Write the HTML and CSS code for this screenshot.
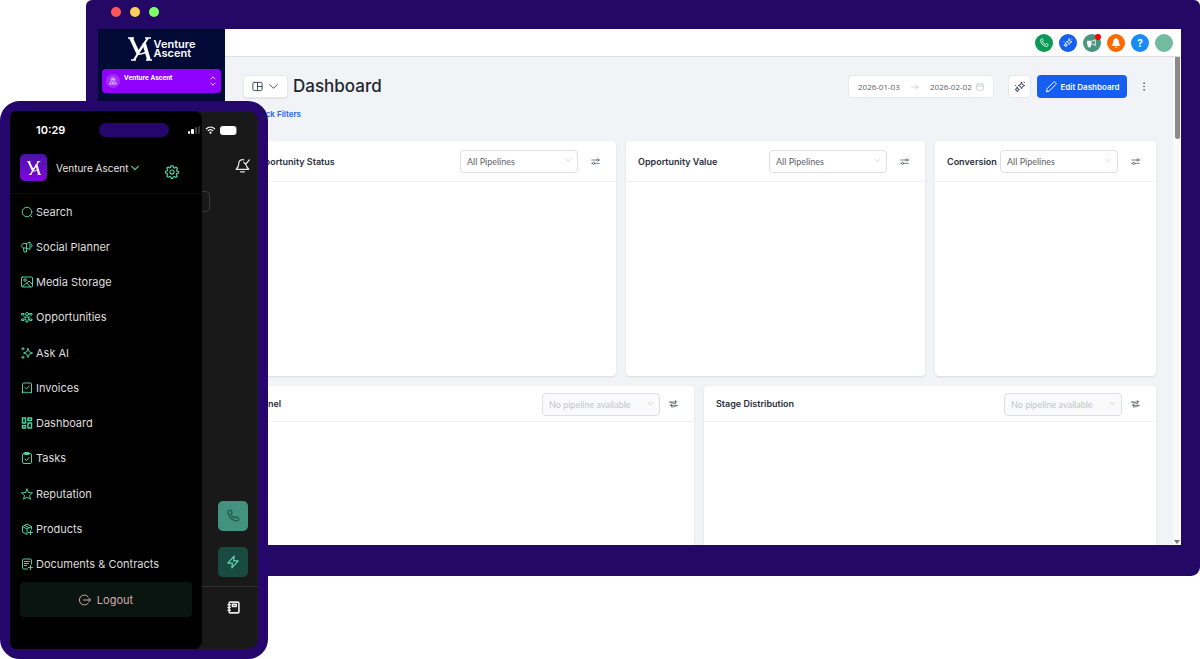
FILE: index.html
```html
<!DOCTYPE html>
<html lang="en">
<head>
  <meta charset="UTF-8">
  <meta name="viewport" content="width=device-width, initial-scale=1.0">
  <title>Venture Ascent</title>
  <link rel="stylesheet" href="styles.css">
</head>
<body>
  <!-- shared icons -->
  <svg class="sprite" aria-hidden="true">
    <symbol id="va-mark" viewBox="0 0 24 24">
      <path d="M3 1l7 15" fill="none" stroke="currentColor" stroke-width="3.6"/>
      <path d="M20 1L9 17M16 7L6 23" fill="none" stroke="currentColor" stroke-width="2.2"/>
      <path d="M16 6l5 17" fill="none" stroke="currentColor" stroke-width="3.6"/>
      <path d="M9 17c4 1 7-1 10-2" fill="none" stroke="currentColor" stroke-width="1.6"/>
      <path d="M0 1h6M17 1h6M3 23h5M18 23h6" stroke="currentColor" stroke-width="1.4"/>
    </symbol>
    <symbol id="chevron" viewBox="0 0 24 24"><path d="M4 8l8 8 8-8"/></symbol>
    <symbol id="phone" viewBox="0 0 24 24"><path d="M8.4 8.9c.7 1.4 1.6 2.8 2.8 3.9 1.100 1.200 2.500 2.100 3.900 2.800l2-1.700c.4-.3 1-.3 1.500-.1l2.700 1.500c.8.400 1 1.300.600 2l-1 1.900c-.5 1-1.500 1.500-2.600 1.300C10.500 19.300 4.700 13.500 3.500 5.700 3.300 4.600 3.800 3.600 4.800 3.100l1.900-1c.7-.4 1.600-.2 2 .600l1.500 2.700c.200.500.200 1.100-.1 1.500z"/></symbol>
    <symbol id="sparkles" viewBox="0 0 24 24">
      <path d="M15 2.500l1.900 4.600 4.600 1.900-4.600 1.900L15 15.500l-1.900-4.600L8.500 9l4.600-1.900z"/>
      <path d="M6.500 12.500l1.300 3.200L11 17l-3.200 1.300-1.300 3.200-1.300-3.200L2 17l3.200-1.300z"/>
      <path d="M20 2l1 1M3 9l1 1"/>
    </symbol>
    <symbol id="sliders" viewBox="0 0 24 24">
      <path d="M2 8h13M21 8h1M2 17h2M10 17h12"/><circle cx="18" cy="8" r="3"/><circle cx="7" cy="17" r="3"/>
    </symbol>
    <symbol id="swap" viewBox="0 0 24 24">
      <path d="M2 8h19l-4-4v8zM22 17H3l4-4v8z"/>
    </symbol>
    <symbol id="megaphone" viewBox="0 0 24 24">
      <path d="M5 5h6l7-3v15l-7-3H5c-5 0-5-9 0-9zM5 14l1 8h5v-8M11 5v9M20 6c3 1 3 6 0 7"/>
    </symbol>
  </svg>

  <div class="stage">
    <div class="desktop">
      <div class="window-bar">
        <span class="light red"></span>
        <span class="light yellow"></span>
        <span class="light green"></span>
      </div>
      <div class="window">
        <aside class="sidebar">
          <div class="brand">
            <svg class="brand-mark"><use href="#va-mark"/></svg>
            <span class="brand-name">Venture<br>Ascent</span>
          </div>
          <button class="switcher" type="button">
            <span class="switcher-pin">
              <svg class="icon" viewBox="0 0 24 24"><path d="M12 18c-4-4-6-7-6-10a6 6 0 0 1 12 0c0 3-2 6-6 10zM5 15l-3 6h20l-3-6"/><circle cx="12" cy="8" r="2"/></svg>
            </span>
            <span class="switcher-name">Venture Ascent</span>
            <svg class="icon switcher-arrows" viewBox="0 0 16 24"><path d="M3 7l5-5 5 5M3 17l5 5 5-5"/></svg>
          </button>
        </aside>

        <div class="main">
          <header class="topbar">
            <button class="round green-bg" type="button" aria-label="Call"><svg class="icon"><use href="#phone"/></svg></button>
            <button class="round blue-bg" type="button" aria-label="AI"><svg class="icon"><use href="#sparkles"/></svg></button>
            <button class="round teal-bg" type="button" aria-label="News">
              <svg class="icon" viewBox="0 0 24 24"><path d="M2 8h10l8-4v14l-8-4H2zM4 15h4v6H4z"/><path d="M2 8h7v7H2zM4 15h4v6H4z" fill="currentColor"/></svg>
              <span class="dot"></span>
            </button>
            <button class="round orange-bg" type="button" aria-label="Notifications">
              <svg class="icon solid" viewBox="0 0 24 24"><path d="M12 2c-4 0-6 3-6 7 0 5-2 7-3 9h18c-1-2-3-4-3-9 0-4-2-7-6-7zM10 22h4"/></svg>
            </button>
            <button class="round sky-bg" type="button" aria-label="Help">?</button>
            <button class="round mint-bg" type="button" aria-label="Profile"></button>
          </header>

          <div class="scroll-area">
            <main class="page">
              <div class="page-head">
                <button class="box layout-toggle" type="button" aria-label="Dashboards">
                  <svg class="icon" viewBox="0 0 24 24"><rect x="2" y="3" width="20" height="18" rx="3"/><path d="M12 3v18M12 12h10"/></svg>
                  <svg class="icon"><use href="#chevron"/></svg>
                </button>
                <h1>Dashboard</h1>
                <div class="box date-range">
                  <input type="text" value="2026-01-03" aria-label="Start date">
                  <svg class="icon arrow-right" viewBox="0 0 24 24"><path d="M2 12h20M14 5l8 7-8 7"/></svg>
                  <input type="text" value="2026-02-02" aria-label="End date">
                  <svg class="icon" viewBox="0 0 24 24"><rect x="2" y="3" width="20" height="19" rx="3"/><path d="M2 9h20M7 1v4M17 1v4"/></svg>
                </div>
                <button class="box ai-button" type="button" aria-label="Ask AI"><svg class="icon"><use href="#sparkles"/></svg></button>
                <button class="edit-button" type="button">
                  <svg class="icon" viewBox="0 0 24 24"><path d="M3 21l1.500-6L17 2.500c1-1 2.500-1 3.500 0l1 1c1 1 1 2.500 0 3.500L9 19.500z"/></svg>
                  Edit Dashboard
                </button>
                <button class="more" type="button" aria-label="More">
                  <svg class="icon solid" viewBox="0 0 24 24"><circle cx="12" cy="3" r="1"/><circle cx="12" cy="12" r="1"/><circle cx="12" cy="21" r="1"/></svg>
                </button>
              </div>
              <a class="quick" href="#">Quick Filters</a>

              <div class="row row-three">
                <section class="card">
                  <div class="card-head">
                    <h2>Opportunity Status</h2>
                    <div class="select"><select aria-label="Status pipeline"><option>All Pipelines</option></select><svg class="icon"><use href="#chevron"/></svg></div>
                    <button class="tune" type="button" aria-label="Settings"><svg class="icon"><use href="#sliders"/></svg></button>
                  </div>
                </section>
                <section class="card">
                  <div class="card-head">
                    <h2>Opportunity Value</h2>
                    <div class="select"><select aria-label="Value pipeline"><option>All Pipelines</option></select><svg class="icon"><use href="#chevron"/></svg></div>
                    <button class="tune" type="button" aria-label="Settings"><svg class="icon"><use href="#sliders"/></svg></button>
                  </div>
                </section>
                <section class="card">
                  <div class="card-head">
                    <h2>Conversion</h2>
                    <div class="select"><select aria-label="Conversion pipeline"><option>All Pipelines</option></select><svg class="icon"><use href="#chevron"/></svg></div>
                    <button class="tune" type="button" aria-label="Settings"><svg class="icon"><use href="#sliders"/></svg></button>
                  </div>
                </section>
              </div>

              <div class="row row-two">
                <section class="card">
                  <div class="card-head">
                    <h2>Funnel</h2>
                    <div class="select"><select aria-label="Funnel pipeline" disabled><option>No pipeline available</option></select><svg class="icon"><use href="#chevron"/></svg></div>
                    <button class="tune" type="button" aria-label="Settings"><svg class="icon"><use href="#swap"/></svg></button>
                  </div>
                </section>
                <section class="card">
                  <div class="card-head">
                    <h2>Stage Distribution</h2>
                    <div class="select"><select aria-label="Stage pipeline" disabled><option>No pipeline available</option></select><svg class="icon"><use href="#chevron"/></svg></div>
                    <button class="tune" type="button" aria-label="Settings"><svg class="icon"><use href="#swap"/></svg></button>
                  </div>
                </section>
              </div>
            </main>
            <div class="scrollbar">
              <span class="thumb"></span>
              <span class="arrow"></span>
            </div>
          </div>
        </div>
      </div>
    </div>

    <div class="phone">
      <div class="drawer">
        <div class="status">
          <span class="time">10:29</span>
          <span class="island"></span>
          <svg class="signal" viewBox="0 0 12 8"><rect x="0" y="5" width="2" height="3" rx="1" fill="#fff"/><rect x="3" y="3" width="3" height="5" rx="1" fill="#fff"/><rect x="7" y="1" width="2" height="7" rx="1" fill="#444"/><rect x="10" y="0" width="2" height="8" rx="1" fill="#333"/></svg>
        </div>
        <div class="account">
          <span class="tile"><svg class="tile-mark"><use href="#va-mark"/></svg></span>
          <button class="account-name" type="button">Venture Ascent <svg class="icon"><use href="#chevron"/></svg></button>
          <button class="gear" type="button" aria-label="Settings">
            <svg class="icon" viewBox="0 0 24 24"><circle cx="12" cy="12" r="3.500"/><path d="M10 1.500h4l.6 3 2 .8L19.200 3.600l2.200 2.400-1.700 2.600.7 2 2.600.4v3l-2.800.7-.8 1.900 1.600 2.700-2.500 2.200-2.500-1.700-1.900.8-.6 2.400h-3l-.8-2.600-2-.8-2.500 1.600L2.900 19l1.600-2.500-.8-2-2.700-.6v-3.200l2.900-.7.8-1.900L3.100 5.500l2.300-2.100 2.500 1.600 1.500-.6z"/></svg>
          </button>
        </div>
        <nav class="menu">
          <a href="#"><svg class="icon" viewBox="0 0 24 24"><circle cx="12" cy="12" r="9.500"/><path d="M19 19l3 3"/></svg>Search</a>
          <a href="#"><svg class="icon" viewBox="0 0 24 24"><use href="#megaphone"/></svg>Social Planner</a>
          <a href="#"><svg class="icon" viewBox="0 0 24 24"><rect x="1" y="2" width="22" height="20" rx="2"/><circle cx="8" cy="8" r="2.500"/><path d="M3 21l13-11 7 7M12 14l7 8"/></svg>Media Storage</a>
          <a href="#"><svg class="icon" viewBox="0 0 24 24"><circle cx="12" cy="6" r="3"/><path d="M9 12h6v5h-1v5h-4v-5H9z"/><path d="M2 5h4v3H2zM18 5h4v3h-4zM2 16h4v3H2zM18 16h4v3h-4zM6 12h2M16 12h2"/></svg>Opportunities</a>
          <a href="#"><svg class="icon" viewBox="0 0 24 24"><path d="M14 3l2.500 6.500L23 12l-6.500 2.500L14 21l-2.500-6.500L5 12l6.500-2.500zM4 1v5M1.500 3.500h5M4 18v5M1.500 20.500h5"/></svg>Ask AI</a>
          <a href="#"><svg class="icon" viewBox="0 0 24 24"><path d="M3 22V4c0-1 1-2 2-2h14c1 0 2 1 2 2v18l-3-2-3 2-3-2-3 2-3-2zM8 11l3 3 5-6"/></svg>Invoices</a>
          <a href="#"><svg class="icon bold" viewBox="0 0 24 24"><path d="M3 2h6v10H3zM14 2h7v5h-7zM3 17h6v5H3zM14 12h7v10h-7z"/></svg>Dashboard</a>
          <a href="#"><svg class="icon" viewBox="0 0 24 24"><rect x="3" y="3" width="18" height="20" rx="3"/><path d="M8 1h8v4H8zM8 14l3 3 5-6"/></svg>Tasks</a>
          <a href="#"><svg class="icon" viewBox="0 0 24 24"><path d="M12 2l3 7 8 .7-6 5.300 2 7.500-7-4-7 4 2-7.500L1 9.700 9 9z"/></svg>Reputation</a>
          <a href="#"><svg class="icon" viewBox="0 0 24 24"><path d="M21 12V7l-9-5-9 5v11l9 5v-10M3 7l9 5 9-5M7 4.500l9 5M19 15v8M15 19h8"/></svg>Products</a>
          <a href="#"><svg class="icon" viewBox="0 0 24 24"><path d="M21 12V4c0-1-1-2-2-2H5c-1 0-2 1-2 2v16c0 1 1 2 2 2h8M7 7h10M7 11h8M7 15h4M19 15v8M15 19h8"/></svg>Documents &amp; Contracts</a>
        </nav>
        <button class="logout" type="button">
          <svg class="icon" viewBox="0 0 24 24"><path d="M18 5a10 10 0 1 0 0 14M9 12h14M19 8l4 4-4 4"/></svg>
          Logout
        </button>
      </div>

      <div class="behind">
        <div class="status">
          <svg class="wifi" viewBox="0 0 12 9"><path d="M1 3.500c3-3 7-3 10 0M3 5.500c2-2 4-2 6 0" fill="none" stroke="#fff" stroke-width="1.500"/><circle cx="6" cy="7.500" r="1.300" fill="#fff"/></svg>
          <span class="battery"></span>
        </div>
        <button class="bell" type="button" aria-label="Notifications">
          <svg class="icon" viewBox="0 0 24 24"><path d="M14 3c-5-1-8 2-8 6 0 5-2 7-4 9h20c-2-2-3-3-4-6M9 22h6M14 7l3 3 6-7"/></svg>
        </button>
        <span class="field-edge"></span>
        <button class="fab call" type="button" aria-label="Call"><svg class="icon"><use href="#phone"/></svg></button>
        <button class="fab bolt" type="button" aria-label="Quick actions">
          <svg class="icon" viewBox="0 0 24 24"><path d="M14 2L3 14h8l-1 8 11-12h-8z"/></svg>
        </button>
        <button class="contacts" type="button" aria-label="Contacts">
          <svg class="icon bold" viewBox="0 0 24 24"><rect x="4" y="2" width="18" height="20" rx="2"/><path d="M10 6h7v4h-7zM2 7h4M2 12h4M2 17h4"/></svg>
        </button>
      </div>
    </div>
  </div>
</body>
</html>
```
FILE: styles.css
```css
* {
  box-sizing: border-box;
}

body {
  margin: 0;
  background-color: #fff;
  font-family: Inter, "Liberation Sans", sans-serif;
}

button {
  margin: 0;
  padding: 0;
  border: none;
  background: none;
  color: inherit;
  font-family: inherit;
  cursor: pointer;
}

a {
  text-decoration: none;
}

.sprite {
  display: none;
}

.icon {
  flex: none;
  width: 12px;
  height: 12px;
  fill: none;
  stroke: currentColor;
  stroke-width: 2;
  stroke-linecap: round;
  stroke-linejoin: round;
}

.icon.solid {
  fill: currentColor;
}

.icon.bold {
  stroke-width: 3;
}

.stage {
  position: relative;
  min-height: 659px;
}

/* desktop window */
.desktop {
  margin-left: 86px;
  padding: 0 19px 31px 12px;
  border-radius: 6px 6px 9px 9px;
  background-color: #240866;
}

.window-bar {
  display: flex;
  align-items: center;
  gap: 9px;
  height: 29px;
  padding: 0 13px 5px;
}

.light {
  width: 10px;
  height: 10px;
  border-radius: 50%;
}

.red { background-color: #ff5757; }
.yellow { background-color: #ffd05a; }
.green { background-color: #7dff67; }

.window {
  display: flex;
  height: 516px;
  overflow: hidden;
  background-color: #f1f3f6;
}

.sidebar {
  flex: none;
  width: 127px;
  padding: 8px 4px;
  background-color: #020b35;
  color: #fff;
}

.brand {
  display: flex;
  justify-content: center;
  gap: 2px;
  height: 32px;
}

.brand-mark {
  width: 24px;
  height: 24px;
}

.brand-name {
  padding-top: 3px;
  font-size: 11px;
  font-weight: 600;
  line-height: 9px;
}

.switcher {
  display: flex;
  align-items: center;
  gap: 4px;
  width: 100%;
  height: 24px;
  padding: 0 4px;
  border-radius: 4px;
  background-color: #8f00ff;
}

.switcher-pin {
  display: flex;
  align-items: center;
  justify-content: center;
  width: 14px;
  height: 14px;
  border-radius: 50%;
  background-color: #a32cff;
}

.switcher-pin .icon {
  width: 8px;
  height: 8px;
}

.switcher-name {
  flex: 1;
  padding-bottom: 7px;
  font-family: Roboto, sans-serif;
  font-size: 7px;
  font-weight: 700;
  text-align: left;
}

.switcher-arrows {
  width: 8px;
  height: 10px;
}

.main {
  display: flex;
  flex: 1;
  flex-direction: column;
  min-width: 0;
}

.topbar {
  display: flex;
  flex: none;
  align-items: center;
  justify-content: flex-end;
  gap: 6px;
  height: 28px;
  padding-right: 8px;
  border-bottom: 1px solid #dadde1;
  background-color: #fff;
}

.round {
  display: flex;
  position: relative;
  align-items: center;
  justify-content: center;
  width: 18px;
  height: 18px;
  border-radius: 50%;
  color: #fff;
  font-size: 10px;
  font-weight: 700;
}

.round .icon {
  width: 10px;
  height: 10px;
}

.green-bg { background-color: #0a9a55; }
.blue-bg { background-color: #155eef; }
.teal-bg { background-color: #4a957d; }
.orange-bg { background-color: #ff6a00; }
.sky-bg { background-color: #188bf6; }
.mint-bg { background-color: #73bb9f; }

.dot {
  position: absolute;
  top: 0;
  right: 0;
  width: 6px;
  height: 6px;
  border-radius: 50%;
  background-color: #f00;
}

.scroll-area {
  display: flex;
  flex: 1;
  min-height: 0;
}

.page {
  flex: 1;
  min-width: 0;
  padding: 18px 17px 0 15px;
}

.scrollbar {
  display: flex;
  flex-direction: column;
  align-items: center;
  justify-content: space-between;
  width: 8px;
  background-color: #fafafa;
}

.thumb {
  width: 5px;
  height: 82px;
  border-radius: 0 0 3px 3px;
  background-color: #8b8b8b;
}

.arrow {
  margin-bottom: 1px;
  border: 3px solid transparent;
  border-top: 4px solid #777;
  border-bottom: 0;
}

.page-head {
  display: flex;
  align-items: center;
  height: 23px;
  padding: 0 6px 0 3px;
}

.box {
  display: flex;
  align-items: center;
  justify-content: center;
  height: 23px;
  border: 1px solid #e6e8ec;
  border-radius: 4px;
  background-color: #fff;
  color: #344054;
}

.layout-toggle {
  gap: 5px;
  width: 45px;
  box-shadow: 0 1px 1px #e1e3e8;
}

.layout-toggle .icon {
  width: 11px;
  height: 11px;
}

h1 {
  margin: 0 auto 0 5px;
  color: #22262f;
  font-size: 17px;
  font-weight: 500;
  line-height: 23px;
}

.date-range {
  gap: 4px;
  width: 146px;
  margin-right: 14px;
}

.date-range input {
  width: 42px;
  padding: 0;
  border: none;
  color: #606266;
  font-family: "Open Sans", sans-serif;
  font-size: 8px;
}

.date-range .icon {
  width: 8px;
  height: 8px;
  color: #c0c4cc;
}

.date-range .arrow-right {
  margin: 0 7px;
}

.ai-button {
  width: 23px;
  margin-right: 6px;
}

.edit-button {
  display: flex;
  align-items: center;
  justify-content: center;
  gap: 4px;
  width: 90px;
  height: 23px;
  margin-right: 11px;
  border-radius: 4px;
  background-color: #155eef;
  color: #fff;
  font-size: 8px;
  font-weight: 600;
}

.more {
  display: flex;
  color: #475467;
}

.more .icon {
  width: 12px;
  height: 9px;
}

.quick {
  display: block;
  width: 61px;
  margin-top: 10px;
  color: #2463eb;
  font-size: 8px;
  font-weight: 600;
  line-height: 12px;
  text-align: right;
}

.row {
  display: grid;
  gap: 10px;
}

.row-three {
  grid-template-columns: 376fr 299fr 221fr;
  margin-top: 21px;
}

.row-two {
  grid-template-columns: 454fr 452fr;
  margin-top: 10px;
}

.card {
  height: 235px;
  border-radius: 4px;
  background-color: #fff;
  box-shadow: 0 1px 2px #d8dbe0;
}

.card-head {
  display: flex;
  align-items: center;
  height: 41px;
  padding: 0 16px 0 12px;
  border-bottom: 1px solid #f0f1f3;
}

.row-two .card-head {
  height: 36px;
}

h2 {
  flex: 1;
  margin: 0;
  color: #2b303b;
  font-size: 9px;
  font-weight: 600;
  white-space: nowrap;
}

.select {
  position: relative;
  width: 118px;
}

.select select {
  width: 100%;
  height: 23px;
  padding: 0 6px;
  border: 1px solid #dcdfe6;
  border-radius: 4px;
  appearance: none;
  background-color: #fff;
  color: #606266;
  font-family: Lato, sans-serif;
  font-size: 9px;
}

.select select:disabled {
  background-color: #fafafa;
  color: #c0c4cc;
  opacity: 1;
}

.select .icon {
  position: absolute;
  top: 8px;
  right: 6px;
  width: 7px;
  height: 7px;
  color: #b8bcc4;
  pointer-events: none;
}

.tune {
  display: flex;
  margin-left: 13px;
  color: #565c66;
}

.row-two .tune {
  margin-left: 9px;
}

.tune .icon {
  width: 9px;
  height: 9px;
}

/* phone */
.phone {
  display: flex;
  position: absolute;
  top: 101px;
  left: 0;
  width: 268px;
  min-height: 558px;
  border: 10px solid #24066c;
  border-radius: 20px;
  background-color: #191919;
}

.drawer {
  display: flex;
  flex: none;
  flex-direction: column;
  width: 192px;
  padding-bottom: 32px;
  border-radius: 6px 8px 8px 6px;
  background-color: #000;
}

.status {
  display: flex;
  flex: none;
  align-items: center;
  height: 38px;
}

.drawer .status {
  justify-content: space-between;
  padding: 0 2px 0 26px;
}

.time {
  color: #fff;
  font-size: 11px;
  font-weight: 600;
}

.island {
  width: 70px;
  height: 14px;
  margin-left: 14px;
  border-radius: 7px;
  background-color: #24066c;
}

.signal {
  width: 12px;
  height: 8px;
}

.account {
  display: flex;
  align-items: center;
  height: 45px;
  padding: 0 23px 7px 10px;
  border-bottom: 1px solid #0c0c0c;
  color: #e4e4e4;
}

.tile {
  display: flex;
  align-items: center;
  justify-content: center;
  width: 27px;
  height: 27px;
  border-radius: 5px;
  background: linear-gradient(#4a12a8, #7d08e0);
  color: #fff;
}

.tile-mark {
  width: 14px;
  height: 14px;
}

.account-name {
  display: flex;
  align-items: center;
  gap: 2px;
  margin: 0 auto 0 9px;
  font-size: 10px;
}

.account-name .icon {
  width: 10px;
  height: 10px;
  stroke-width: 3;
  color: #4fcfa5;
}

.gear {
  display: flex;
  margin-top: 8px;
  color: #4fcfa5;
}

.gear .icon {
  width: 14px;
  height: 14px;
}

.menu {
  display: flex;
  flex: 1;
  flex-direction: column;
}

.menu a {
  display: flex;
  flex: 1;
  align-items: center;
  gap: 3px;
  padding-left: 11px;
  color: #dedede;
  font-size: 11px;
}

.menu .icon {
  color: #4fcfa5;
}

.logout {
  display: flex;
  align-items: center;
  justify-content: center;
  gap: 6px;
  height: 35px;
  margin: 0 10px;
  border-radius: 4px;
  background-color: #0a1512;
  color: #d4abab;
  font-size: 11px;
}

.behind {
  display: flex;
  flex: 1;
  flex-direction: column;
  align-items: center;
  color: #e8e8e8;
}

.behind .status {
  align-self: flex-start;
  gap: 4px;
  padding-left: 3px;
}

.wifi {
  width: 11px;
  height: 8px;
}

.battery {
  width: 16px;
  height: 9px;
  border-radius: 3px;
  background-color: #fff;
  box-shadow: 1px 0 0 #777;
}

.bell {
  display: flex;
  align-self: flex-end;
  margin: 9px 8px 0 0;
}

.bell .icon {
  width: 15px;
  height: 15px;
}

.field-edge {
  align-self: flex-start;
  width: 8px;
  height: 21px;
  margin-top: 18px;
  border: 1px solid #3a3a3a;
  border-left: none;
  border-radius: 0 5px 5px 0;
}

.fab {
  display: flex;
  align-items: center;
  justify-content: center;
  width: 30px;
  height: 30px;
  margin-left: 6px;
  border-radius: 5px;
}

.fab .icon {
  width: 14px;
  height: 14px;
}

.call {
  margin-top: auto;
  background-color: #43917f;
  color: #1d564b;
}

.bolt {
  margin-top: 16px;
  background-color: #194b42;
  color: #63d8b8;
}

.contacts {
  display: flex;
  justify-content: center;
  width: 100%;
  height: 63px;
  margin-top: 9px;
  padding: 14px 0 0 6px;
  border-top: 1px solid #333;
}

.contacts .icon {
  width: 13px;
  height: 13px;
}
```
